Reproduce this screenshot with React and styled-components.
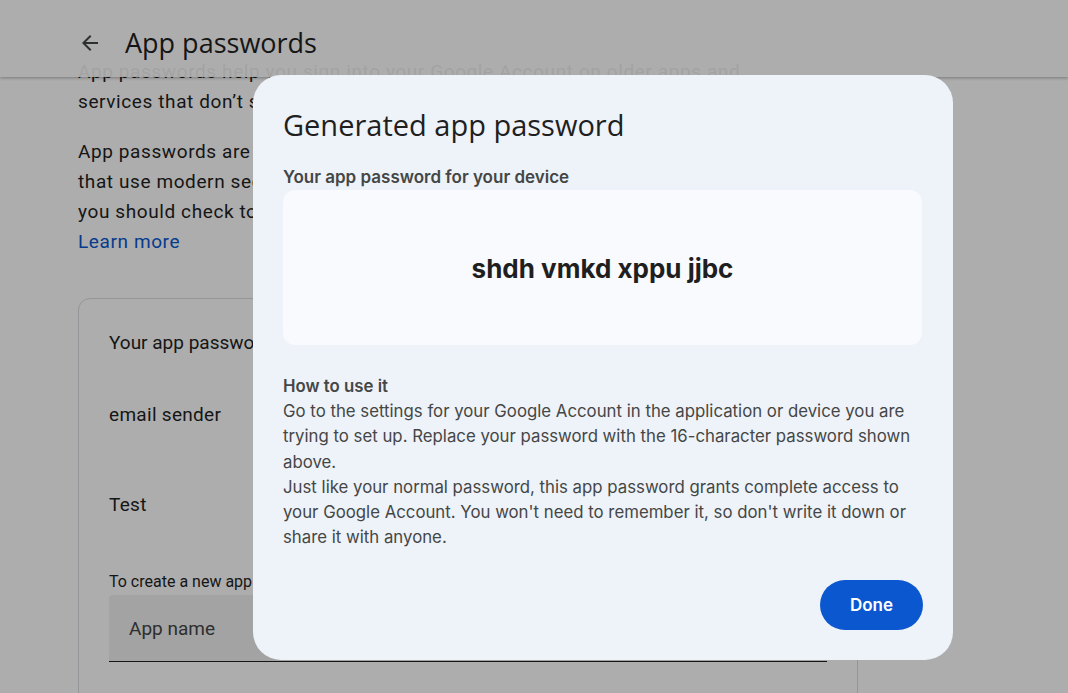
import React from 'react';
import styled, { createGlobalStyle } from 'styled-components';

const GlobalStyle = createGlobalStyle`
  html, body {
    margin: 0;
    padding: 0;
    background: #ffffff;
    overflow: hidden;
  }
  body {
    font-family: Roboto, "Noto Sans", Arial, sans-serif;
    color: #1f1f1f;
  }
`;

const Page = styled.div`
  position: relative;
  width: 1068px;
  height: 693px;
  overflow: hidden;
  background: #ffffff;
`;

const Header = styled.header`
  position: absolute;
  top: 0;
  left: 0;
  right: 0;
  height: 77px;
  display: flex;
  align-items: center;
  gap: 21px;
  padding: 0 0 0 76px;
  box-sizing: border-box;
  background: rgba(255, 255, 255, 0.93);
  box-shadow: 0 1px 3px rgba(0, 0, 0, 0.3);
  z-index: 2;
`;

const BackButton = styled.button`
  width: 28px;
  height: 28px;
  padding: 0;
  border: none;
  background: none;
  display: flex;
  align-items: center;
  justify-content: center;
  color: #444746;
  margin-top: 8px;
`;

const PageTitle = styled.h1`
  margin: 8px 0 0;
  font-family: "Open Sans", Roboto, sans-serif;
  font-weight: 400;
  font-size: 27px;
  color: #1f1f1f;
`;

const Content = styled.main`
  padding: 57px 0 0 78px;
  width: 780px;
`;

const Para = styled.p`
  margin: 0 0 20px;
  font-size: 19px;
  letter-spacing: 0.6px;
  line-height: 30px;
  color: #1f1f1f;
  width: 672px;
`;

const LearnMore = styled.a`
  color: #0b57d0;
  text-decoration: none;
`;

const Card = styled.section`
  margin-top: 41px;
  border: 1px solid #dadce0;
  border-radius: 12px;
  height: 600px;
  padding: 30px 30px 0 30px;
`;

const CardHeading = styled.div`
  font-size: 19px;
  line-height: 28px;
  color: #1f1f1f;
`;

const AppRow = styled.div`
  font-size: 19px;
  letter-spacing: 0.3px;
  line-height: 28px;
  margin-top: ${(p) => p.gap}px;
`;

const Hint = styled.div`
  margin-top: 52px;
  font-size: 16px;
  line-height: 22px;
  color: #1f1f1f;
`;

const Field = styled.div`
  margin-top: 2px;
  height: 67px;
  width: 718px;
  background: #f0f0f0;
  border-bottom: 1px solid #1f1f1f;
  border-radius: 4px 4px 0 0;
  display: flex;
  align-items: center;
  padding-left: 20px;
  box-sizing: border-box;
  font-size: 19px;
  color: #444746;
`;

const Scrim = styled.div`
  position: absolute;
  inset: 0;
  background: rgba(0, 0, 0, 0.32);
  z-index: 3;
`;

const Dialog = styled.div`
  position: absolute;
  left: 253px;
  top: 75px;
  width: 700px;
  height: 585px;
  box-sizing: border-box;
  background: #eef2f9;
  border-radius: 28px;
  padding: 30px 31px 30px 30px;
  display: flex;
  flex-direction: column;
  z-index: 4;
`;

const DialogTitle = styled.h2`
  margin: 0;
  font-family: "Open Sans", Roboto, sans-serif;
  font-weight: 400;
  font-size: 29px;
  line-height: 40px;
  color: #1f1f1f;
`;

const Label = styled.div`
  margin-top: 20px;
  font-family: Inter, Roboto, sans-serif;
  font-weight: 600;
  font-size: 17px;
  line-height: 24px;
  color: #444746;
`;

const PasswordBox = styled.div`
  margin-top: 1px;
  height: 155px;
  border-radius: 12px;
  background: #f8fafd;
  display: flex;
  align-items: center;
  justify-content: center;
`;

const Password = styled.div`
  font-family: Inter, Roboto, sans-serif;
  font-weight: 700;
  font-size: 26px;
  color: #1f1f1f;
  margin-top: 2px;
`;

const HowTo = styled.div`
  margin-top: 29px;
  font-family: Inter, Roboto, sans-serif;
  font-size: 16.8px;
  line-height: 25.2px;
  color: #444746;

  > strong {
    display: block;
    font-weight: 600;
  }

  > p {
    margin: 0;
  }
`;

const Actions = styled.div`
  margin-top: auto;
  display: flex;
  justify-content: flex-end;
`;

const DoneButton = styled.button`
  height: 50px;
  width: 103px;
  margin-right: -1px;
  border: none;
  border-radius: 25px;
  background: #0b57d0;
  color: #ffffff;
  font-family: Inter, Roboto, sans-serif;
  font-weight: 600;
  font-size: 17px;
  cursor: pointer;
`;

const ArrowIcon = () => (
  <svg width="24" height="24" viewBox="0 0 24 24" fill="currentColor">
    <path d="M20 11H7.83l5.59-5.59L12 4l-8 8 8 8 1.41-1.41L7.83 13H20v-2z" />
  </svg>
);

export default function App() {
  return (
    <>
      <GlobalStyle />
      <Page>
        <Header>
          <BackButton aria-label="Back">
            <ArrowIcon />
          </BackButton>
          <PageTitle>App passwords</PageTitle>
        </Header>
        <Content>
          <Para>
            App passwords help you sign into your Google Account on older apps and
            services that don’t support modern security standards.
          </Para>
          <Para>
            App passwords are less secure than using up-to-date apps and services
            that use modern security standards. Before you create an app password,
            you should check to see if your app needs this in order to sign in.{' '}
            <br />
            <LearnMore href="#">Learn more</LearnMore>
          </Para>
          <Card>
            <CardHeading>Your app passwords</CardHeading>
            <AppRow gap={44}>email sender</AppRow>
            <AppRow gap={62}>Test</AppRow>
            <Hint>To create a new app specific password, type a name for it below...</Hint>
            <Field>App name</Field>
          </Card>
        </Content>
        <Scrim />
        <Dialog role="dialog">
          <DialogTitle>Generated app password</DialogTitle>
          <Label>Your app password for your device</Label>
          <PasswordBox>
            <Password>shdh vmkd xppu jjbc</Password>
          </PasswordBox>
          <HowTo>
            <strong>How to use it</strong>
            <p>
              Go to the settings for your Google Account in the application or device
              you are trying to set up. Replace your password with the 16-character
              password shown above.
            </p>
            <p>
              Just like your normal password, this app password grants complete access
              to your Google Account. You won't need to remember it, so don't write it
              down or share it with anyone.
            </p>
          </HowTo>
          <Actions>
            <DoneButton>Done</DoneButton>
          </Actions>
        </Dialog>
      </Page>
    </>
  );
}
